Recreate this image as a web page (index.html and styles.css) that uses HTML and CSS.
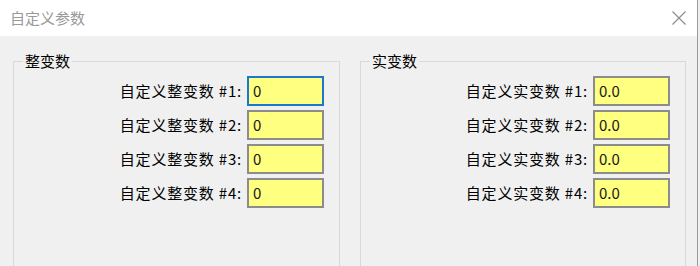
FILE: index.html
```html
<!DOCTYPE html>
<html lang="zh-CN">
<head>
  <meta charset="UTF-8">
  <title>自定义参数</title>
  <link rel="stylesheet" href="styles.css">
</head>
<body>
  <div class="window">
    <div class="title-bar">
      <span class="title">自定义参数</span>
      <svg class="close-btn" width="14" height="14" viewBox="0 0 14 14">
        <path d="M0.5 0.5 L13.5 13.5 M13.5 0.5 L0.5 13.5" stroke="#8a8a8a" stroke-width="1.1" fill="none"/>
      </svg>
    </div>
    <div class="dialog-body">
      <fieldset class="group">
        <legend>整变数</legend>
        <div class="field-row">
          <label for="int1">自定义整变数 #1:</label>
          <input id="int1" class="value-box focused" type="text" value="0">
        </div>
        <div class="field-row">
          <label for="int2">自定义整变数 #2:</label>
          <input id="int2" class="value-box" type="text" value="0">
        </div>
        <div class="field-row">
          <label for="int3">自定义整变数 #3:</label>
          <input id="int3" class="value-box" type="text" value="0">
        </div>
        <div class="field-row">
          <label for="int4">自定义整变数 #4:</label>
          <input id="int4" class="value-box" type="text" value="0">
        </div>
      </fieldset>
      <fieldset class="group">
        <legend>实变数</legend>
        <div class="field-row">
          <label for="real1">自定义实变数 #1:</label>
          <input id="real1" class="value-box" type="text" value="0.0">
        </div>
        <div class="field-row">
          <label for="real2">自定义实变数 #2:</label>
          <input id="real2" class="value-box" type="text" value="0.0">
        </div>
        <div class="field-row">
          <label for="real3">自定义实变数 #3:</label>
          <input id="real3" class="value-box" type="text" value="0.0">
        </div>
        <div class="field-row">
          <label for="real4">自定义实变数 #4:</label>
          <input id="real4" class="value-box" type="text" value="0.0">
        </div>
      </fieldset>
    </div>
  </div>
</body>
</html>
```

FILE: styles.css
```css
body {
    margin: 0;
    padding: 0;
    font-family: "Noto Sans CJK SC", "Noto Sans", sans-serif;
    font-size: 15px;
    color: #000;
    background-color: #f0f0f0;
    overflow: hidden;
}

.window {
    width: 697px;
    height: 266px;
    overflow: hidden;
    border-right: 1px solid #9a9a9a;
    background-color: #f0f0f0;
}

.title-bar {
    height: 36px;
    background-color: #fff;
    display: flex;
    align-items: center;
    justify-content: space-between;
    padding: 0 11px 0 10px;
    box-sizing: border-box;
}

.title {
    color: #9a9a9a;
    font-size: 15px;
    line-height: 20px;
}

.close-btn {
    display: block;
    margin-top: -1px;
}

.dialog-body {
    display: flex;
    gap: 20px;
    padding: 15px 0 0 13px;
}

.group {
    width: 327px;
    height: 216px;
    margin: 0;
    padding: 5px 15px 0 9px;
    border: 1px solid #d9d9d9;
    box-sizing: border-box;
    display: flex;
    flex-direction: column;
    gap: 4px;
}

.group + .group {
    width: 326px;
}

.group legend {
    padding: 0 2px;
    line-height: 20px;
    font-size: 15px;
}

.field-row {
    display: flex;
    justify-content: flex-end;
    align-items: center;
    gap: 5px;
    height: 30px;
}

.field-row label {
    line-height: 20px;
    letter-spacing: 0.8px;
    white-space: nowrap;
}

.value-box {
    width: 77px;
    height: 30px;
    box-sizing: border-box;
    margin: 0;
    padding: 0 0 2px 4px;
    border: 2px solid #8c8c8c;
    background-color: #ffff80;
    font-family: "Noto Sans CJK SC", "Noto Sans", sans-serif;
    font-size: 15px;
    color: #1a1a1a;
    outline: none;
}

.value-box.focused {
    border-color: #1b78d0;
}
```
